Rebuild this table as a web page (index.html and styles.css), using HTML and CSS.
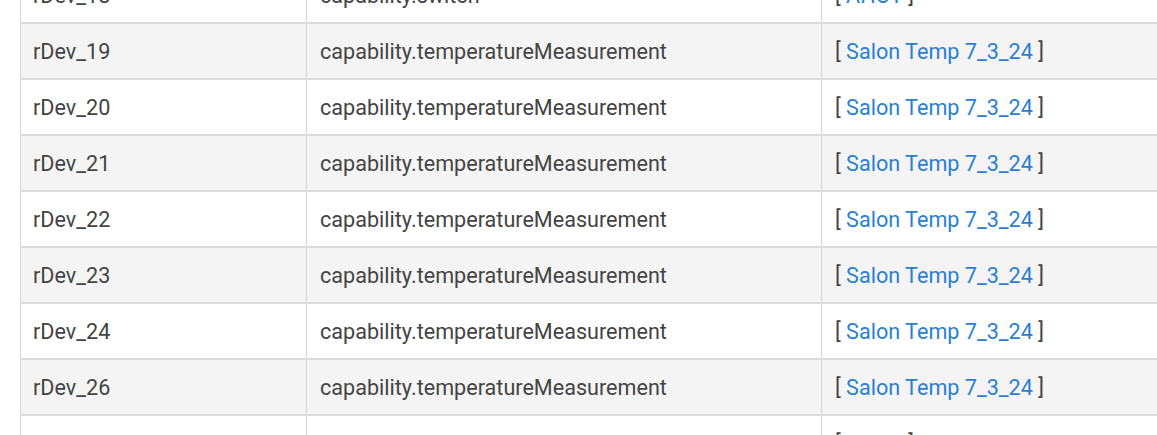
FILE: index.html
```html
<!DOCTYPE html>
<html>
<head>
<meta charset="utf-8">
<link rel="stylesheet" href="styles.css">
</head>
<body>
<div class="viewport">
  <table class="devices">
    <colgroup>
      <col class="c1"><col class="c2"><col class="c3">
    </colgroup>
    <tbody>
      <tr><td>rDev_18</td><td>capability.switch</td><td>[ <a href="#">AHOY</a> ]</td></tr>
      <tr class="alt"><td>rDev_19</td><td>capability.temperatureMeasurement</td><td>[ <a href="#">Salon Temp 7_3_24</a> ]</td></tr>
      <tr><td>rDev_20</td><td>capability.temperatureMeasurement</td><td>[ <a href="#">Salon Temp 7_3_24</a> ]</td></tr>
      <tr class="alt"><td>rDev_21</td><td>capability.temperatureMeasurement</td><td>[ <a href="#">Salon Temp 7_3_24</a> ]</td></tr>
      <tr><td>rDev_22</td><td>capability.temperatureMeasurement</td><td>[ <a href="#">Salon Temp 7_3_24</a> ]</td></tr>
      <tr class="alt"><td>rDev_23</td><td>capability.temperatureMeasurement</td><td>[ <a href="#">Salon Temp 7_3_24</a> ]</td></tr>
      <tr><td>rDev_24</td><td>capability.temperatureMeasurement</td><td>[ <a href="#">Salon Temp 7_3_24</a> ]</td></tr>
      <tr class="alt"><td>rDev_26</td><td>capability.temperatureMeasurement</td><td>[ <a href="#">Salon Temp 7_3_24</a> ]</td></tr>
      <tr><td></td><td>capability.switch</td><td>[ <a href="#">AHOY</a> ]</td></tr>
    </tbody>
  </table>
</div>
</body>
</html>
```
FILE: styles.css
```css
html, body {
  margin: 0;
  padding: 0;
  background: #ffffff;
}
.viewport {
  width: 1157px;
  height: 435px;
  overflow: hidden;
}
.devices {
  margin-top: -34px;
  margin-left: 20px;
  width: 1300px;
  table-layout: fixed;
  border-collapse: collapse;
  font-family: Roboto, "Liberation Sans", sans-serif;
  font-size: 21.6px;
  color: #444444;
}
.c1 { width: 286px; }
.c2 { width: 515px; }
.devices td {
  border-top: 2px solid #dcdcdc;
  border-left: 1px solid #d6d6d6;
  padding: 16px 12px 14px 12px;
  line-height: 24px;
  white-space: nowrap;
}
.devices td + td {
  padding-left: 13px;
}
.devices tr.alt td {
  background: #f4f4f4;
}
.devices a {
  color: #2a7fd3;
  text-decoration: none;
}
```
